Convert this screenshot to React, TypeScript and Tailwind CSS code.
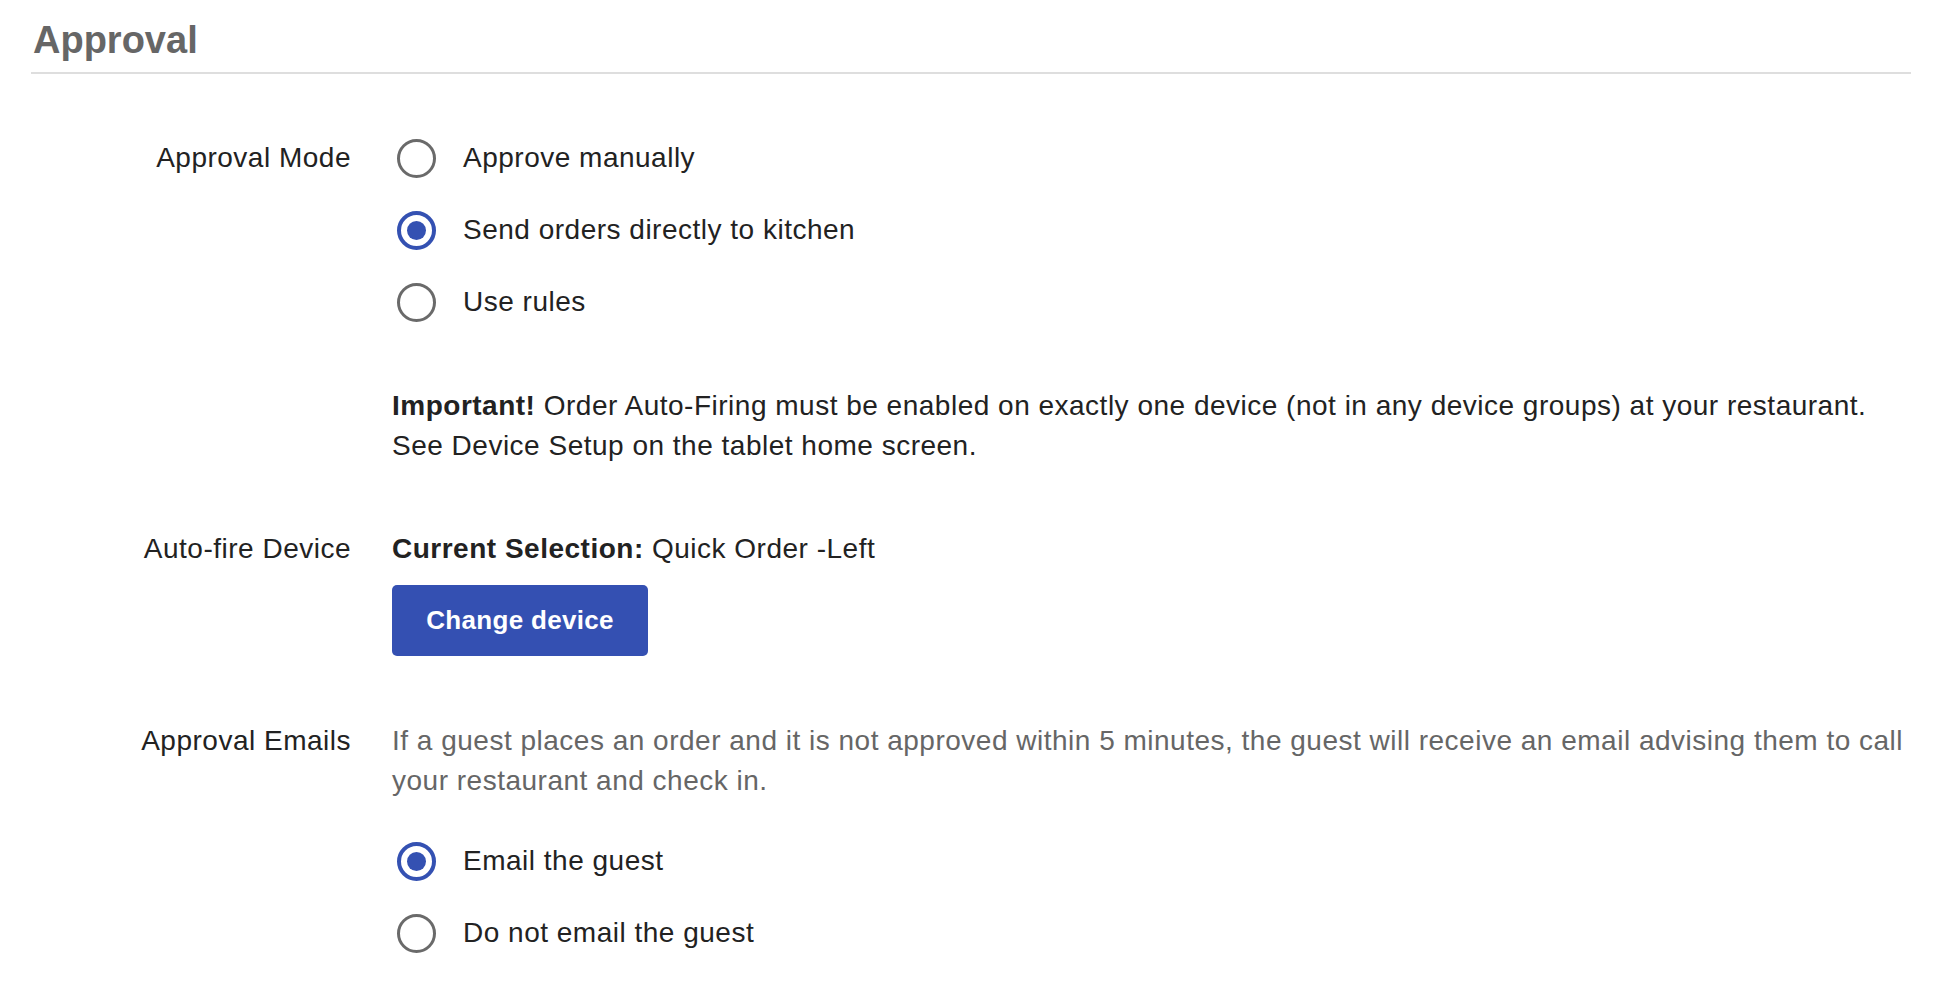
import React, { useState } from 'react';

interface RadioOption {
  value: string;
  label: string;
}

const modeOptions: RadioOption[] = [
  { value: 'manual', label: 'Approve manually' },
  { value: 'kitchen', label: 'Send orders directly to kitchen' },
  { value: 'rules', label: 'Use rules' },
];

const emailOptions: RadioOption[] = [
  { value: 'email', label: 'Email the guest' },
  { value: 'none', label: 'Do not email the guest' },
];

const RadioRow = ({
  option,
  checked,
  onSelect,
}: {
  option: RadioOption;
  checked: boolean;
  onSelect: (v: string) => void;
}) => (
  <label
    onClick={() => onSelect(option.value)}
    className="flex items-center h-[72px] cursor-pointer select-none"
  >
    {checked ? (
      <span className="ml-[5px] w-[39px] h-[39px] rounded-full border-[4px] border-[#3451b2] flex items-center justify-center shrink-0">
        <span className="w-[19px] h-[19px] rounded-full bg-[#3451b2]" />
      </span>
    ) : (
      <span className="ml-[5px] w-[39px] h-[39px] rounded-full border-[3px] border-[#6a6a6a] shrink-0" />
    )}
    <span className="ml-[27px] text-[#222]">{option.label}</span>
  </label>
);

export default function App() {
  const [mode, setMode] = useState('kitchen');
  const [emailMode, setEmailMode] = useState('email');

  return (
    <div
      className="min-h-screen bg-white text-[28px] tracking-[0.5px] text-[#222]"
      style={{ fontFamily: '"Liberation Sans", Arial, sans-serif' }}
    >
      <div className="ml-[31px] mr-[43px]">
        <div className="pt-[21px] pb-[13px] border-b-2 border-[#dedede]">
          <h1 className="ml-[2px] text-[38px] leading-[38px] font-bold tracking-normal text-[#666]">Approval</h1>
        </div>

        {/* Approval mode */}
        <div className="flex mt-[48px]">
          <div className="w-[320px] shrink-0 text-right leading-[72px]">Approval Mode</div>
          <div className="ml-[41px] flex-1">
            {modeOptions.map((o) => (
              <RadioRow key={o.value} option={o} checked={mode === o.value} onSelect={setMode} />
            ))}
          </div>
        </div>

        <div className="flex mt-[48px]">
          <div className="w-[320px] shrink-0" />
          <p className="ml-[41px] flex-1 leading-[40px]">
            <span className="font-bold">Important!</span> Order Auto-Firing must be enabled on exactly one device (not in
            any device groups) at your restaurant. See Device Setup on the tablet home screen.
          </p>
        </div>

        {/* Auto-fire device */}
        <div className="flex mt-[63px]">
          <div className="w-[320px] shrink-0 text-right leading-[40px]">Auto-fire Device</div>
          <div className="ml-[41px] flex-1">
            <p className="leading-[40px]">
              <span className="font-bold">Current Selection:</span> Quick Order -Left
            </p>
            <button className="mt-[16px] w-[256px] h-[71px] rounded-[5px] bg-[#3450b2] text-white font-bold text-[26px] tracking-[0.3px]">
              Change device
            </button>
          </div>
        </div>

        {/* Approval emails */}
        <div className="flex mt-[65px]">
          <div className="w-[320px] shrink-0 text-right leading-[40px]">Approval Emails</div>
          <div className="ml-[41px] flex-1">
            <p className="leading-[40px] text-[#666]">
              If a guest places an order and it is not approved within 5 minutes, the guest will receive an email
              advising them to call your restaurant and check in.
            </p>
            <div className="mt-[24px]">
              {emailOptions.map((o) => (
                <RadioRow key={o.value} option={o} checked={emailMode === o.value} onSelect={setEmailMode} />
              ))}
            </div>
          </div>
        </div>
      </div>
    </div>
  );
}
